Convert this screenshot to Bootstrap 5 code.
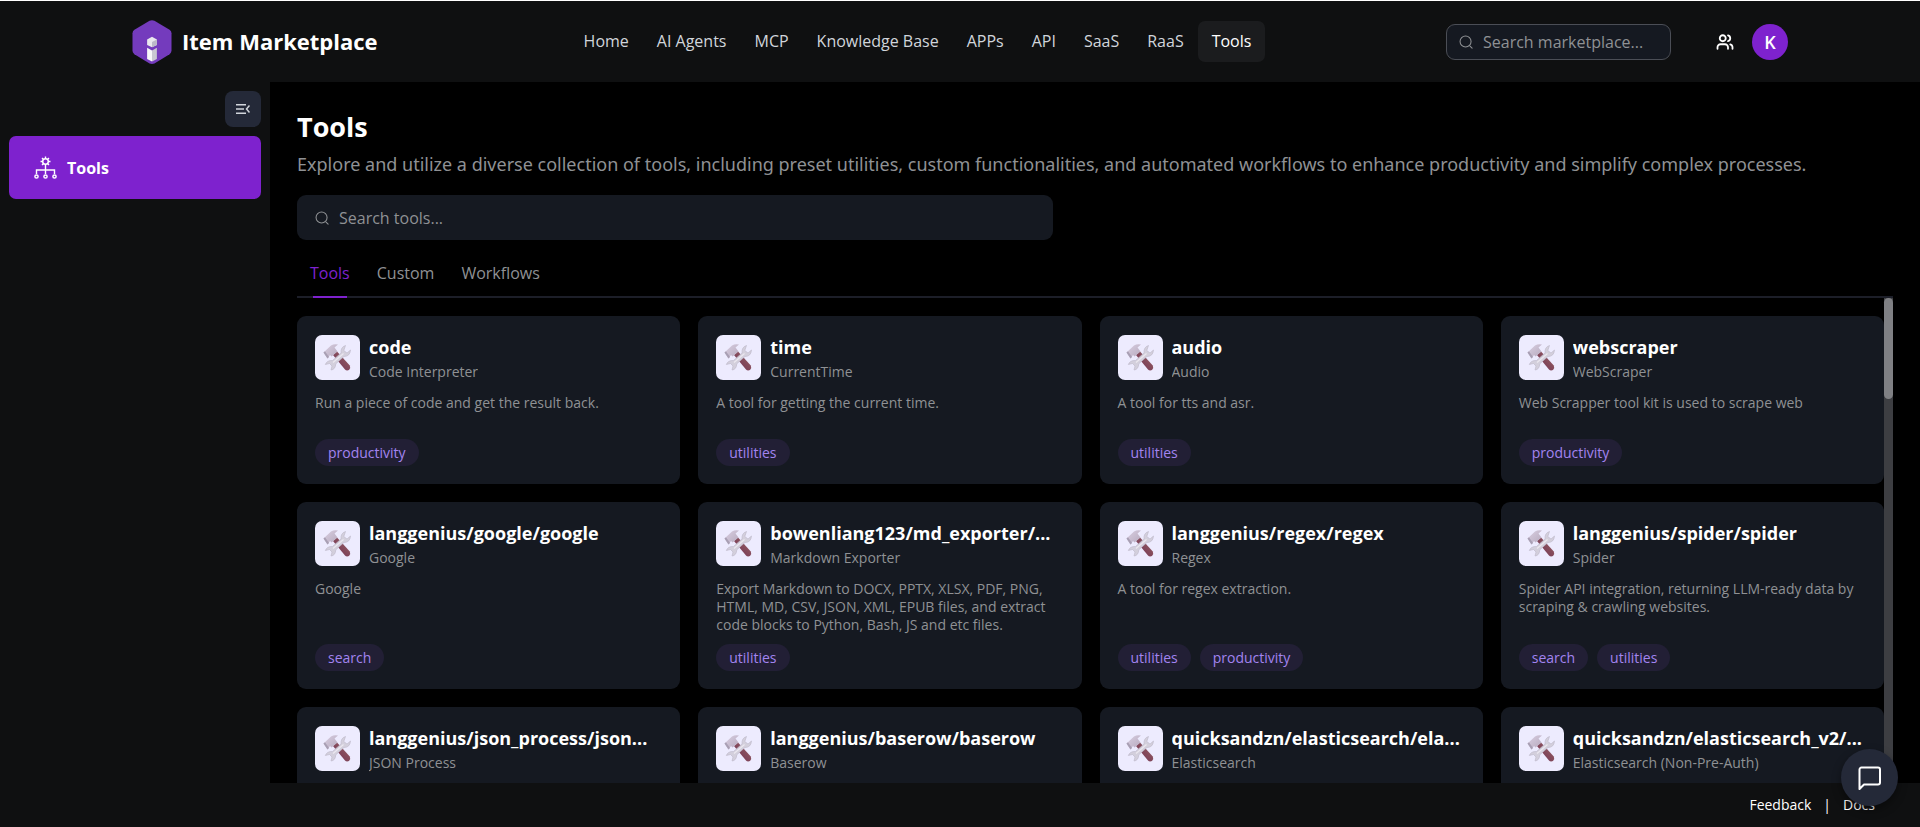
<!DOCTYPE html>
<html lang="en">
<head>
<meta charset="utf-8">
<meta name="viewport" content="width=device-width, initial-scale=1">
<title>Item Marketplace</title>
<link href="https://cdn.jsdelivr.net/npm/bootstrap@5.3.0/dist/css/bootstrap.min.css" rel="stylesheet">
<style>
  :root { --panel: #0f1011; --surface: #151921; --raised: #242938; --accent: #7e22ce; --muted: #8f9194; }
  body { font-family: "Open Sans", "Noto Sans", sans-serif; font-size: 16px; line-height: 20px; background: #000; color: #fff; border-top: 1px solid #fff; overflow: hidden; }
  a { color: inherit; text-decoration: none; }
  .topbar { background: var(--panel); height: 81px; padding: 0 132px; }
  .brand-link { gap: 10px; min-width: 257px; }
  .brand-name { font-size: 22px; font-weight: 700; line-height: 28px; padding-bottom: 2px; }
  .main-nav .nav-link { padding: 10px 14px; color: #d1d5db; border-radius: 7px; line-height: 21px; }
  .main-nav .nav-link.active { background: #1b1c1e; color: #fff; }
  .field { background: var(--surface); border-radius: 9px; color: var(--muted); }
  .field input { background: transparent; border: 0; outline: 0; color: #fff; min-width: 0; padding: 0; line-height: 20px; }
  .field input::placeholder { color: var(--muted); opacity: 1; }
  .field-top { width: 225px; height: 36px; border: 1px solid #4b4e56; padding: 0 12px; gap: 10px; }
  .field-tools { width: 756px; height: 45px; padding: 0 18px; gap: 10px; }
  .team-link { margin: 0 18px 0 45px; }
  .avatar { width: 36px; height: 36px; background: var(--accent); font-size: 18px; font-weight: 600; }
  .sidebar { width: 270px; background: var(--panel); padding: 9px; gap: 9px; }
  .collapse-btn { width: 36px; height: 36px; background: var(--raised); border: 0; border-radius: 8px; color: #d1d5db; }
  .side-link { background: var(--accent); border-radius: 7px; height: 63px; padding: 0 25px; gap: 10px; font-weight: 700; }
  .content { padding: 27px 27px 0; min-width: 0; }
  .content h1 { font-size: 27px; line-height: 36px; font-weight: 700; margin: 0; }
  .lede { font-family: "Noto Sans", sans-serif; font-size: 18px; line-height: 28px; color: var(--muted); margin: 5px 0 17px; }
  .tabs { border-bottom: 2px solid #1c1e28; padding: 0 13px; gap: 27px; height: 58px; }
  .tabs button { background: none; border: 0; padding: 8px 0 0; color: var(--muted); height: 58px; position: relative; }
  .tabs button.active { color: var(--accent); }
  .tabs button.active::after { content: ""; position: absolute; left: 3px; right: 3px; bottom: 0; height: 2px; background: var(--accent); }
  .scroller { overflow-y: auto; padding-top: 18px; scrollbar-width: none; min-width: 0; }
  .scroller::-webkit-scrollbar { display: none; }
  .track { width: 9px; background: #3d3e42; }
  .thumb { height: 101px; background: #7f8084; border-radius: 5px; }
  .tool-grid { display: grid; grid-template-columns: repeat(4, minmax(0, 1fr)); gap: 18px; padding-bottom: 18px; }
  .tool { background: var(--surface); border-radius: 9px; padding: 18px; min-height: 168px; }
  .tool-head { gap: 9px; }
  .tool-icon { width: 45px; height: 45px; margin-top: 1px; border-radius: 7px; background: #edebfe; }
  .tool h2 { font-size: 18px; line-height: 27px; font-weight: 700; margin: 0; }
  .tool-sub { font-size: 14px; line-height: 21px; color: var(--muted); }
  .tool-text { font-size: 14px; line-height: 18px; color: var(--muted); margin: 12px 0 10px; }
  .tag-row { gap: 9px; }
  .tag { background: #221f35; color: #a284f0; border-radius: 14px; font-size: 14px; line-height: 27px; padding: 0 13px; }
  .foot { background: var(--panel); height: 44px; padding: 0 45px; font-size: 14px; gap: 12px; }
  .chat { position: fixed; right: 22px; bottom: 21px; width: 57px; height: 57px; background: var(--raised); border: 0; color: #fff; box-shadow: 0 4px 10px rgba(0,0,0,.4); }
</style>
</head>
<body class="d-flex flex-column vh-100">
<svg width="0" height="0" class="position-absolute" aria-hidden="true">
  <defs>
    <linearGradient id="metal" x1="0" y1="0" x2="1" y2="1"><stop offset="0" stop-color="#d9cfe2"/><stop offset="1" stop-color="#b6a9bd"/></linearGradient>
    <linearGradient id="grip" x1="0" y1="1" x2="1" y2="0"><stop offset="0" stop-color="#6e2f52"/><stop offset="1" stop-color="#9a6464"/></linearGradient>
  </defs>
  <symbol id="lens" viewBox="0 0 16 16"><g fill="none" stroke="currentColor" stroke-width="1.2" stroke-linecap="round"><circle cx="7.5" cy="7.5" r="6.3"/><path d="M12.6 12.6 15 15"/></g></symbol>
  <symbol id="hammer-wrench" viewBox="0 0 45 45">
    <path d="M18 20 22 16.500 34.800 30.500Q36 33 34 35 31.500 36 30 34.500Z" fill="url(#grip)"/>
    <path d="M8.500 17.500 16 10.500Q19 8.500 23 9.500L19.500 12.500 22.500 16.500 16.500 21.500 15 20 12.500 23.500Z" fill="url(#metal)"/>
    <path d="M8.500 17.500 10 16.200 14 22 12.500 23.500Z" fill="#a89fb4"/>
    <path d="M30.500 10.500Q25.500 12 26 18L17.500 25.500Q12 25.200 10.300 29.500L14.500 28.500 17 31 16 35Q20.500 34.500 20.800 28.800L29 21.500Q35 21.500 35.500 15L32 18 28.800 15.500Z" fill="#d3cfdc" stroke="#bcb7c8" stroke-width=".6"/>
    <path d="M18 27.500 28.500 18.500" stroke="#ebe8ef" stroke-width="1.2"/>
  </symbol>
</svg>

<header class="topbar d-flex align-items-center justify-content-between flex-shrink-0">
  <a href="#" class="brand-link d-inline-flex align-items-center">
    <svg width="40" height="46" viewBox="0 0 41 46" aria-hidden="true">
      <path d="M18 1.200Q20.500 0 23 1.200L38.500 10.500Q40.500 12 40.500 14V32Q40.500 34 38.500 35.500L23 45Q20.500 46 18 45L2.500 35.500Q.5 34 .5 32V14Q.5 12 2.500 10.500Z" fill="#743bbd"/>
      <path d="M20.500 17.500 25.500 20.500V26L20.500 28.500 15.500 26V20.500Z" fill="#e9e8ee"/><path d="M20.500 23V28.500L25.500 26V20.500Z" fill="#bcbac8"/>
      <path d="M15.500 29 20.500 31.800V43L15.500 40.500Z" fill="#f7f7fa"/><path d="M20.500 31.800 25.500 29V40.500L20.500 43Z" fill="#c9c8d2"/>
    </svg>
    <span class="brand-name">Item Marketplace</span>
  </a>
  <nav class="main-nav nav flex-nowrap">
    <a class="nav-link" href="#">Home</a><a class="nav-link" href="#">AI Agents</a><a class="nav-link" href="#">MCP</a><a class="nav-link" href="#">Knowledge Base</a><a class="nav-link" href="#">APPs</a><a class="nav-link" href="#">API</a><a class="nav-link" href="#">SaaS</a><a class="nav-link" href="#">RaaS</a><a class="nav-link active" href="#" aria-current="page">Tools</a>
  </nav>
  <div class="d-flex align-items-center">
    <label class="field field-top d-flex align-items-center">
      <svg width="14" height="14" class="flex-shrink-0"><use href="#lens"/></svg>
      <input type="search" class="flex-grow-1" placeholder="Search marketplace..." aria-label="Search marketplace">
    </label>
    <a href="#" aria-label="Team" class="team-link d-flex">
      <svg width="18" height="18" viewBox="0 0 24 24" fill="none" stroke="currentColor" stroke-width="2.400" stroke-linecap="round" stroke-linejoin="round"><path d="M16 21v-2a4 4 0 0 0-4-4H6a4 4 0 0 0-4 4v2"/><circle cx="9" cy="7" r="4"/><path d="M22 21v-2a4 4 0 0 0-3-3.870M16 3.130a4 4 0 0 1 0 7.750"/></svg>
    </a>
    <a href="#" class="avatar rounded-circle d-flex align-items-center justify-content-center">K</a>
  </div>
</header>

<div class="d-flex flex-grow-1 overflow-hidden">
  <aside class="sidebar d-flex flex-column flex-shrink-0">
    <button class="collapse-btn d-flex align-items-center justify-content-center align-self-end" type="button" aria-label="Collapse sidebar">
      <svg width="14" height="12" viewBox="0 0 14 12" fill="none" stroke="currentColor" stroke-width="1.500"><path d="M0 1.800H10M0 6H8M0 10.200H10M13.500 2.500 10.500 6 13.500 9.500"/></svg>
    </button>
    <a href="#" class="side-link d-flex align-items-center">
      <svg width="23" height="24" viewBox="0 0 23 24" fill="none" stroke="currentColor" stroke-width="1.500"><circle cx="11.500" cy="5.500" r="2.800"/><path stroke-width="1.400" d="M11.500 .5V2.700M11.500 8.300V18M6.500 5.500H8.700M14.300 5.500H16.500M8 2 9.500 3.500M13.500 7.500 15 9M15 2 13.500 3.500M9.500 7.500 8 9M2.500 18V14H20.500V18"/><circle cx="2.500" cy="20.500" r="1.600"/><circle cx="11.500" cy="20.500" r="1.600"/><circle cx="20.500" cy="20.500" r="1.600"/></svg>
      <span>Tools</span>
    </a>
  </aside>

  <main class="content flex-grow-1 d-flex flex-column">
    <h1>Tools</h1>
    <p class="lede">Explore and utilize a diverse collection of tools, including preset utilities, custom functionalities, and automated workflows to enhance productivity and simplify complex processes.</p>
    <label class="field field-tools d-flex align-items-center flex-shrink-0">
      <svg width="14" height="14" class="flex-shrink-0"><use href="#lens"/></svg>
      <input type="search" class="flex-grow-1" placeholder="Search tools..." aria-label="Search tools">
    </label>
    <div class="tabs d-flex flex-shrink-0" role="tablist">
      <button type="button" class="active" role="tab" aria-selected="true">Tools</button>
      <button type="button" role="tab" aria-selected="false">Custom</button>
      <button type="button" role="tab" aria-selected="false">Workflows</button>
    </div>
    <div class="d-flex flex-grow-1 overflow-hidden">
      <div class="scroller flex-grow-1">
        <div class="tool-grid" id="tools"></div>
      </div>
      <div class="track flex-shrink-0" aria-hidden="true"><div class="thumb"></div></div>
    </div>
  </main>
</div>

<footer class="foot d-flex align-items-center justify-content-end flex-shrink-0">
  <a href="#">Feedback</a><span>|</span><a href="#">Docs</a>
</footer>
<button class="chat rounded-circle d-flex align-items-center justify-content-center" type="button" aria-label="Open chat">
  <svg width="24" height="24" viewBox="0 0 24 24" fill="none" stroke="currentColor" stroke-width="2" stroke-linejoin="round"><path d="M22 3.500V16.500A2 2 0 0 1 20 18.500H6L1.500 23V3.500A2 2 0 0 1 3.500 1.500H20A2 2 0 0 1 22 3.500Z"/></svg>
</button>

<script src="https://cdn.jsdelivr.net/npm/bootstrap@5.3.0/dist/js/bootstrap.bundle.min.js"></script>
<script>
  const tools = [
    ["code", "Code Interpreter", "Run a piece of code and get the result back.", ["productivity"]],
    ["time", "CurrentTime", "A tool for getting the current time.", ["utilities"]],
    ["audio", "Audio", "A tool for tts and asr.", ["utilities"]],
    ["webscraper", "WebScraper", "Web Scrapper tool kit is used to scrape web", ["productivity"]],
    ["langgenius/google/google", "Google", "Google", ["search"]],
    ["bowenliang123/md_exporter/...", "Markdown Exporter", "Export Markdown to DOCX, PPTX, XLSX, PDF, PNG, HTML, MD, CSV, JSON, XML, EPUB files, and extract code blocks to Python, Bash, JS and etc files.", ["utilities"]],
    ["langgenius/regex/regex", "Regex", "A tool for regex extraction.", ["utilities", "productivity"]],
    ["langgenius/spider/spider", "Spider", "Spider API integration, returning LLM-ready data by scraping & crawling websites.", ["search", "utilities"]],
    ["langgenius/json_process/json...", "JSON Process", "", []],
    ["langgenius/baserow/baserow", "Baserow", "", []],
    ["quicksandzn/elasticsearch/ela...", "Elasticsearch", "", []],
    ["quicksandzn/elasticsearch_v2/...", "Elasticsearch (Non-Pre-Auth)", "", []]
  ];
  document.getElementById("tools").innerHTML = tools.map(([name, label, text, tags]) => `
    <article class="tool d-flex flex-column">
      <div class="tool-head d-flex align-items-start">
        <svg class="tool-icon flex-shrink-0" aria-hidden="true"><use href="#hammer-wrench"/></svg>
        <div class="overflow-hidden"><h2 class="text-truncate">${name}</h2><div class="tool-sub text-truncate">${label}</div></div>
      </div>
      <p class="tool-text">${text.replace("&", "&amp;")}</p>
      <div class="tag-row d-flex mt-auto">${tags.map(t => `<span class="tag">${t}</span>`).join("")}</div>
    </article>`).join("");
</script>
</body>
</html>
